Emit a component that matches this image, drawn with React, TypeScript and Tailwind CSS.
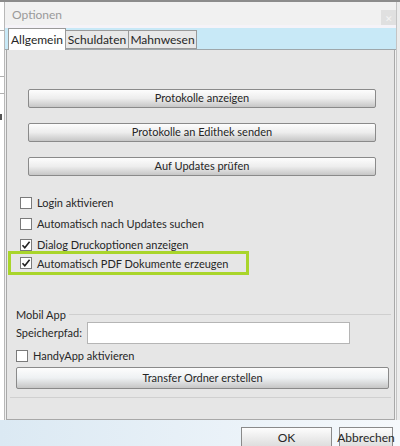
import React from "react";

const font = { fontFamily: "Lato, 'Open Sans', sans-serif" };

function Btn({ label, className }: { label: string; className: string }) {
  return (
    <div
      className={
        "flex items-center justify-center border border-[#8a8a8a] rounded-[2px] bg-linear-to-b from-[#fdfdfd] via-[#ededed] to-[#c6c6c6] text-[11px] text-[#262626] whitespace-nowrap " +
        className
      }
    >
      {label}
    </div>
  );
}

function Check({ checked }: { checked?: boolean }) {
  return (
    <div className="w-[12px] h-[12px] border border-[#7a7a7a] bg-white flex items-center justify-center shrink-0">
      {checked && (
        <svg width="10" height="10" viewBox="0 0 10 10">
          <path d="M1.5 5.2 L3.8 7.8 L8.6 1.8" fill="none" stroke="#222" strokeWidth="1.6" />
        </svg>
      )}
    </div>
  );
}

function Row({ label, checked, className = "" }: { label: string; checked?: boolean; className?: string }) {
  return (
    <div className={"flex items-center h-[21px] gap-[5px] " + className}>
      <Check checked={checked} />
      <span className="text-[11px] text-[#262626] leading-none whitespace-nowrap">{label}</span>
    </div>
  );
}

export default function App() {
  return (
    <div className="w-[400px] h-[446px] overflow-hidden flex flex-col bg-[#f0f0f0]" style={font}>
      <div className="h-[2px] bg-[#8c8c8c] shrink-0" />
      <div className="flex h-[418px] shrink-0">
        {/* underlying window strip */}
        <div className="w-[4px] bg-white flex flex-col shrink-0">
          <div className="h-[28px]" />
          <div className="h-px bg-[#b0b0b0]" />
          <div className="h-[45px]" />
          <div className="h-px bg-[#b0b0b0]" />
          <div className="h-[16px]" />
          <div className="h-px bg-[#b0b0b0]" />
          <div className="h-[20px]" />
          <div className="h-[6px] w-[2px] bg-[#555]" />
          <div className="flex-1" />
        </div>
        {/* dialog */}
        <div className="flex-1 flex flex-col border-l border-[#b8b8b8]">
          <div className="h-[23px] flex items-center justify-between pl-[7px] bg-[#f1f1f1]">
            <span className="text-[12px] text-[#9a9a9a] mt-[3px]">Optionen</span>
            <div className="w-[15px] h-[17px] bg-[#e0e0e0] mt-[10px] flex items-center justify-center text-[9px] text-[#f4f4f4]">
              ✕
            </div>
          </div>
          <div className="h-[3px] bg-[#f5f3f8]" />
          <div className="h-[22px] flex items-end bg-[#c8e9f7] border-b border-[#9fa7ab] pl-[3px]">
            <div className="h-[22px] w-[58px] bg-white border border-b-0 border-[#9a9a9a] flex items-center justify-center text-[12px] text-[#262626] -mb-px relative">
              Allgemein
            </div>
            <div className="h-[19px] w-[63px] bg-[#e8e8e8] border border-l-0 border-[#9a9a9a] flex items-center justify-center text-[12px] text-[#262626]">
              Schuldaten
            </div>
            <div className="h-[19px] w-[68px] bg-[#e8e8e8] border border-l-0 border-[#9a9a9a] flex items-center justify-center text-[12px] text-[#262626]">
              Mahnwesen
            </div>
          </div>
          <div className="flex-1 mx-[1px] border border-t-0 border-[#a8a8a8] bg-[#e6e6e6] flex flex-col">
            <div className="pl-[21px] pr-[18px] pt-[39px] flex flex-col gap-[15px]">
              <Btn label="Protokolle anzeigen" className="h-[19px]" />
              <Btn label="Protokolle an Edithek senden" className="h-[19px]" />
              <Btn label="Auf Updates prüfen" className="h-[19px]" />
            </div>
            <div className="flex flex-col pl-[13px] mt-[16px]">
              <Row label="Login aktivieren" />
              <Row label="Automatisch nach Updates suchen" />
              <Row label="Dialog Druckoptionen anzeigen" checked />
            </div>
            <div className="ml-[1px] w-[241px] h-[24px] border-[3px] border-[#a9d52b] flex items-center pl-[9px] -mt-[4px] shrink-0">
              <div className="flex items-center gap-[5px]">
                <Check checked />
                <span className="text-[11px] text-[#262626] leading-none whitespace-nowrap">
                  Automatisch PDF Dokumente erzeugen
                </span>
              </div>
            </div>
            {/* group box */}
            <div className="mt-[34px] mx-[3px] flex flex-col">
              <div className="flex items-center h-[12px] -mb-[6px]">
                <span className="pl-[6px] pr-[3px] text-[11px] text-[#262626]">Mobil App</span>
                <div className="flex-1 h-[2px] border-t border-[#cfcfcf] border-b-white" />
              </div>
              <div className="border-b border-[#d0d0d0] pb-[8px] pt-[7px] pl-[6px] pr-[2px] flex flex-col">
                <div className="flex items-center h-[22px]">
                  <span className="w-[71px] text-[11px] text-[#262626] shrink-0">Speicherpfad:</span>
                  <div className="w-[263px] h-[22px] bg-white border border-[#b5b5b5]" />
                </div>
                <div className="flex items-center gap-[5px] h-[23px] pt-[1px]">
                  <Check />
                  <span className="text-[11px] text-[#262626]">HandyApp aktivieren</span>
                </div>
                <Btn label="Transfer Ordner erstellen" className="h-[22px] from-[#fbfdff] via-[#eef1f3]" />
              </div>
            </div>
          </div>
        </div>
        <div className="w-[4px] bg-[#ececec] border-l border-[#c4c4c4] shrink-0" />
      </div>
      <div className="flex-1 bg-linear-to-r from-[#dbe9f3] to-[#f6f9fc] flex items-start justify-end pt-[7px] pr-[7px] gap-[7px]">
        <div className="w-[91px] h-[21px] border border-[#8a8a8a] bg-linear-to-b from-[#fdfdfd] to-[#dcdcdc] flex items-center justify-center text-[12px] text-[#262626]">
          OK
        </div>
        <div className="w-[54px] h-[21px] border border-[#8a8a8a] bg-linear-to-b from-[#fdfdfd] to-[#dcdcdc] flex items-center justify-center text-[12px] text-[#262626]">
          Abbrechen
        </div>
      </div>
    </div>
  );
}
